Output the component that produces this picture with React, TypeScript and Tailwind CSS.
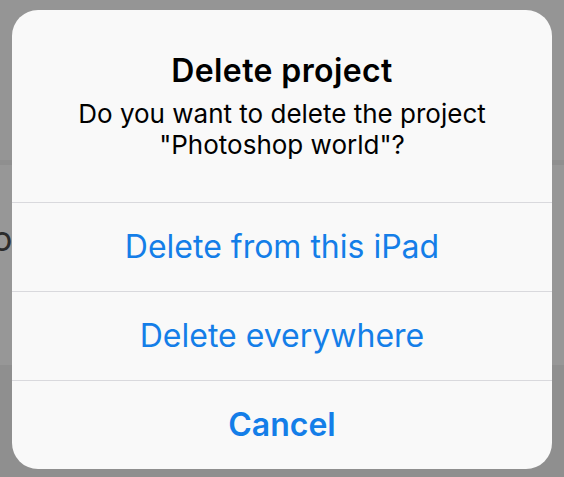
const font = { fontFamily: 'Inter, "Liberation Sans", sans-serif' };

function ActionRow({ label, bold }: { label: string; bold?: boolean }) {
    return (
        <button
            className={`h-[89px] w-full border-t border-[#d9d9dd] flex items-center justify-center text-[32px] leading-[38px] text-[#147ee8] ${bold ? 'font-semibold' : 'font-normal'}`}
        >
            {label}
        </button>
    );
}

export default function App() {
    return (
        <div className="relative w-[564px] h-[477px] overflow-hidden" style={font}>
            {/* page behind the alert, dimmed */}
            <div className="flex flex-col h-full">
                <div className="h-[160px] bg-[#959595]" />
                <div className="h-[5px] bg-[#8f8f8f]" />
                <div className="h-[200px] bg-[#979797] pt-[57px]">
                    <span className="block -ml-[8px] text-[34px] leading-[34px] text-[#2c2c2c]">o</span>
                </div>
                <div className="flex-1 bg-[#8f8f8f]" />
            </div>

            {/* alert */}
            <div className="absolute left-[12px] top-[10px] w-[540px] h-[459px] rounded-[26px] bg-[#f9f9f9] overflow-hidden flex flex-col">
                <div className="h-[192px] pt-[42px] flex flex-col items-center text-center">
                    <h2 className="text-[32px] leading-[38px] font-semibold tracking-[0.4px] text-black">Delete project</h2>
                    <p className="mt-[8px] text-[26px] leading-[31px] text-black">
                        Do you want to delete the project
                        <br />
                        "Photoshop world"?
                    </p>
                </div>
                <ActionRow label="Delete from this iPad" />
                <ActionRow label="Delete everywhere" />
                <ActionRow label="Cancel" bold />
            </div>
        </div>
    );
}
